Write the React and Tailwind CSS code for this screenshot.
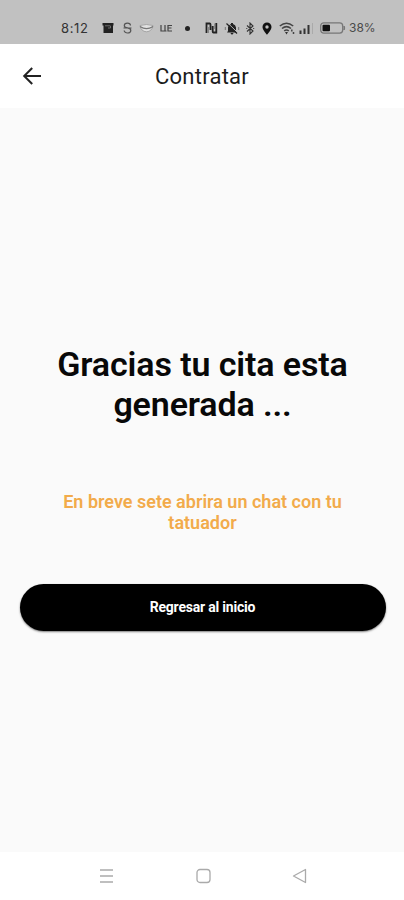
function StatusBar() {
  return (
    <div className="flex h-[44px] items-end bg-[#c1c1c1] pb-[8px] pl-[61px] text-[#333]">
      <div className="flex h-[16px] items-center">
        <span className="w-[41px] whitespace-nowrap font-['Inter',sans-serif] text-[13px] leading-[16px] tracking-[0.6px]">8:12</span>
        <svg className="mr-[9px]" width="12" height="12" viewBox="0 0 12 12">
          <path d="M0.5 1h11v2.500h-.5V11H1.500V3.500h-1z" fill="#222" />
          <path d="M3 3.800h5.500M6 6h2.500V4" fill="none" stroke="#777" strokeWidth=".9" />
        </svg>
        <svg className="mr-[7px]" width="9" height="12" viewBox="0 0 9 12" fill="none" stroke="#555" strokeWidth="1.2">
          <path d="M7.500 3.500C7.500.3 1.300.3 1.300 3.500q0 2 3.200 2.300Q7.800 6.200 7.800 8.500c0 3.300-6.600 3.300-6.600 0M0.500 6h8" />
        </svg>
        <svg className="mr-[6px]" width="15" height="10" viewBox="0 0 15 10">
          <path d="M1 2.5Q7.5 0.5 14 2.5Q13 8.5 7.5 8.8Q2 8.5 1 2.5z" fill="#e2e2e2" stroke="#999" strokeWidth=".8" />
          <path d="M1 3.500Q7.500 7.800 14 3.500" fill="none" stroke="#777" strokeWidth="1.400" />
        </svg>
        <svg className="mr-[12px]" width="13" height="9" viewBox="0 0 13 9" fill="none" stroke="#444" strokeWidth="1.200">
          <path d="M1 1v6h4V1M5 7h1.500M12 1.500H8v5.500h4M8 4h3.500" />
        </svg>
        <span className="mr-[15px] size-[5px] rounded-full bg-[#222]" />
        <svg className="mr-[6px]" width="13" height="12" viewBox="0 0 13 12" fill="none" stroke="#222" strokeWidth="1.800">
          <path d="M1.500 11V1.500h3.200q.8 0 .8 1V8M11.300 1v9.500H8.500q-.8 0-.8-1V4" />
          <path d="M3.500 5v6M9.600 1.500V7" stroke="#777" strokeWidth=".8" />
        </svg>
        <svg className="mr-[6px]" width="16" height="13" viewBox="0 0 16 13">
          <path d="M4 9V5.500Q4.300 2.500 7 2V1h2v1Q11.700 2.500 12 5.500V9L13 10.500H3zM6.500 11h3q-.5 1.500-1.500 1.500T6.500 11z" fill="#222" />
          <path d="M3.800 1.200l10.500 10" stroke="#c1c1c1" strokeWidth="1" />
          <path d="M2.500 1.500l10.500 10" stroke="#222" strokeWidth="1.200" />
          <path d="M1.300 5v3M14.700 5v3" stroke="#777" strokeWidth="1" />
        </svg>
        <svg className="mr-[7px]" width="9" height="13" viewBox="0 0 9 13" fill="none" stroke="#333" strokeWidth="1.1">
          <path d="M1 3.5l6 5.5-3 3V1l3 3-6 5.5M0.3 6.5h1M7.2 6.5h1" />
        </svg>
        <svg className="mr-[7px]" width="10" height="13" viewBox="0 0 10 13">
          <path fillRule="evenodd" d="M5 .5a4.5 4.5 0 0 0-4.5 4.5C.5 8 5 12.7 5 12.7S9.500 8 9.500 5A4.500 4.500 0 0 0 5 .5zM5 3.300a1.700 1.700 0 1 1 0 3.400a1.700 1.700 0 0 1 0-3.400z" fill="#111" />
        </svg>
        <svg className="mr-[3px]" width="17" height="13" viewBox="0 0 17 13" fill="none" stroke="#444" strokeWidth="1.500">
          <path d="M.8 4Q7.500-1.500 14.200 4M3 6.500Q7.500 2.800 12 6.500M5.200 8.800Q7.500 7 9.800 8.800" />
          <path d="M6 10h3L7.500 12.500z" fill="#333" stroke="none" />
          <path d="M12.800 7.500v2M14.500 10v2" strokeWidth="1.500" />
        </svg>
        <svg className="mr-[6px]" width="15" height="12" viewBox="0 0 15 12">
          <path d="M.5 8.500h2V12h-2zM4.500 6.500h2V12h-2zM8.500 3h2v9h-2z" fill="#333" />
          <path d="M13 1h1v11h-1z" fill="#aaa" />
        </svg>
        <svg className="mr-[3px]" width="26" height="12" viewBox="0 0 26 12">
          <rect x=".7" y=".9" width="22" height="10.200" rx="3" fill="none" stroke="#777" strokeWidth="1.300" />
          <rect x="2.500" y="2.700" width="7.500" height="6.600" rx="1" fill="#111" />
          <path d="M24 4q1.500 2 0 4z" fill="#777" stroke="#777" />
        </svg>
        <span className="whitespace-nowrap font-['Inter',sans-serif] text-[12px] leading-[16px] text-[#4a4a4a]">38%</span>
      </div>
    </div>
  );
}

export default function App() {
  return (
    <div className="flex h-[900px] w-[404px] flex-col overflow-hidden bg-[#fafafa] font-['Roboto',sans-serif]">
      <StatusBar />
      <header className="grid h-[64px] grid-cols-[64px_1fr_64px] items-center bg-white">
        <svg className="ml-[20px]" width="24" height="24" viewBox="0 0 24 24" fill="none" stroke="#222" strokeWidth="2">
          <path d="M21 12H4.500M12.200 4l-8 8 8 8" />
        </svg>
        <h1 className="whitespace-nowrap pt-[2px] text-center text-[22px] font-[450] leading-[28px] tracking-[0.250px] text-[#1c1c1c]">Contratar</h1>
      </header>
      <main className="flex h-[744px] flex-col items-center pl-px pt-[236px] text-center">
        <h2 className="whitespace-nowrap text-[34px] font-semibold leading-[40px] tracking-[-0.120px] text-[#080808]">Gracias tu cita esta<br />generada ...</h2>
        <p className="mt-[67px] whitespace-nowrap text-[18px] font-semibold leading-[21px] text-[#f2ab4b]">En breve sete abrira un chat con tu<br />tatuador</p>
        <button className="mt-[51px] h-[47px] w-[366px] rounded-full bg-black text-[14px] font-bold tracking-[-0.200px] text-white shadow-[0_1px_2px_rgba(0,0,0,0.5)]">Regresar al inicio</button>
      </main>
      <nav className="flex h-[48px] items-center bg-white pl-[99px]">
        <svg width="16" height="16" viewBox="0 0 16 16" stroke="#aaa" strokeWidth="1.300"><path d="M1 2h13M1 8h13M1 14h13" /></svg>
        <svg className="ml-[80px]" width="16" height="16" viewBox="0 0 16 16" fill="none" stroke="#aaa" strokeWidth="1.300"><rect x="2" y="1.500" width="13" height="13" rx="3" /></svg>
        <svg className="ml-[81px]" width="16" height="16" viewBox="0 0 16 16" fill="none" stroke="#aaa" strokeWidth="1.300" strokeLinejoin="round"><path d="M1.500 8L13.500 1.500v13z" /></svg>
      </nav>
    </div>
  );
}
